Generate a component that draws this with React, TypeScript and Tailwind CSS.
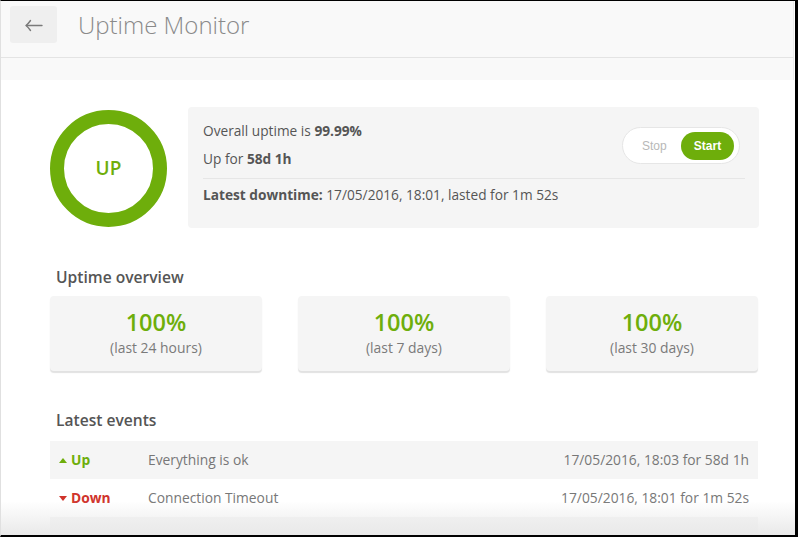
import React from "react";

const overview = [
  { value: "100%", label: "(last 24 hours)" },
  { value: "100%", label: "(last 7 days)" },
  { value: "100%", label: "(last 30 days)" },
];

const events = [
  { up: true, text: "Everything is ok", when: "17/05/2016, 18:03 for 58d 1h" },
  { up: false, text: "Connection Timeout", when: "17/05/2016, 18:01 for 1m 52s" },
];

function BackArrow() {
  return (
    <svg width="20" height="14" viewBox="0 0 20 14" fill="none" stroke="#7a7a7a" strokeWidth="1.4" strokeLinecap="round" strokeLinejoin="round">
      <path d="M18 7.5H2.5" />
      <path d="M6.5 2.5Q4.5 5.5 2 7.5Q4.5 9.5 6.5 12.5" />
    </svg>
  );
}

export default function App() {
  return (
    <div
      className="relative w-[798px] h-[537px] overflow-hidden bg-white border-t border-r-[3px] border-b-2 border-l border-t-black border-r-black border-b-black border-l-[#e0e0e0] text-[#555]"
      style={{ fontFamily: '"Open Sans", "Noto Sans", sans-serif' }}
    >
      {/* header */}
      <div className="h-[57px] bg-[#f9f9f9] border-b border-[#e4e4e4] border-r border-r-[#ececec] mr-[1px] flex items-start">
        <button className="mt-[5px] ml-[9px] w-[47px] h-[37px] rounded-[3px] bg-[#efefef] flex items-center justify-center">
          <BackArrow />
        </button>
        <h1 className="ml-[21px] mt-[6px] text-[24px] font-light text-[#8a8a8a]">
          Uptime Monitor
        </h1>
      </div>
      <div className="h-[22px] bg-[#f9f9f9] border-r border-[#ececec] mr-[1px]" />

      {/* content */}
      <div className="ml-[49px] w-[709px] pt-[27px]">
        <div className="flex items-start">
          <div className="mt-[3px] w-[117px] h-[117px] rounded-full border-[14px] border-[#6eae0b] flex items-center justify-center shrink-0">
            <span className="text-[19px] font-semibold text-[#6eae0b]">UP</span>
          </div>
          <div className="ml-[21px] flex-1 h-[121px] bg-[#f5f5f5] rounded-[4px] px-[15px] pt-[10px] pr-[14px]">
            <div className="flex justify-between items-start h-[56px]">
              <div className="text-[13.7px] text-[#555]">
                <div className="h-[28px] leading-[28px]">
                  Overall uptime is <span className="font-bold">99.99%</span>
                </div>
                <div className="h-[28px] leading-[28px]">
                  Up for <span className="font-bold">58d 1h</span>
                </div>
              </div>
              <div
                className="mt-[10px] mr-[5px] w-[118px] h-[37px] rounded-full bg-white border border-[#e6e6e6] flex items-center pl-[19px] pr-[5px] justify-between"
                style={{ fontFamily: '"Liberation Sans", Arial, sans-serif' }}
              >
                <span className="text-[12px] text-[#b8b8b8]">Stop</span>
                <span className="w-[53px] h-[28px] rounded-full bg-[#6eae0b] text-white text-[12px] font-bold flex items-center justify-center">
                  Start
                </span>
              </div>
            </div>
            <div className="mt-[5px] border-t border-[#e6e6e6]" />
            <div className="mt-[6px] h-[20px] leading-[20px] text-[13.7px]">
              <span className="font-bold">Latest downtime:</span> 17/05/2016, 18:01, lasted for 1m 52s
            </div>
          </div>
        </div>

        <h2 className="mt-[38px] ml-[6px] text-[15.6px] font-semibold text-[#555] leading-[22px]">
          Uptime overview
        </h2>
        <div className="mt-[8px] grid grid-cols-3 gap-[36px] pr-[1px]">
          {overview.map((o) => (
            <div
              key={o.label}
              className="h-[75px] bg-[#f5f5f5] rounded-[4px] shadow-[0_2px_1px_#e2e2e2] flex flex-col items-center pt-[12px]"
            >
              <div className="text-[23.5px] font-semibold text-[#6eae0b] leading-[28px]">{o.value}</div>
              <div className="mt-[2px] text-[13.9px] text-[#7a7a7a] leading-[20px]">{o.label}</div>
            </div>
          ))}
        </div>

        <h2 className="mt-[38px] ml-[6px] text-[15.6px] font-semibold text-[#555] leading-[22px]">
          Latest events
        </h2>
        <div className="mt-[10px] mr-[1px]">
          {events.map((e, i) => (
            <div
              key={e.text}
              className={`h-[38px] flex items-center text-[13.8px] pl-[9px] pr-[9px] ${i % 2 === 0 ? "bg-[#f5f5f5]" : "bg-white"}`}
            >
              <span
                className={`w-[89px] font-bold flex items-center gap-[4px] ${e.up ? "text-[#6eae0b]" : "text-[#d0332b]"}`}
              >
                <svg width="8" height="5" viewBox="0 0 8 5" fill="currentColor">
                  {e.up ? <path d="M0 5L4 0L8 5Z" /> : <path d="M0 0L8 0L4 5Z" />}
                </svg>
                {e.up ? "Up" : "Down"}
              </span>
              <span className="flex-1 text-[#777]">{e.text}</span>
              <span className="text-[#777]">{e.when}</span>
            </div>
          ))}
          <div className="h-[38px] bg-[#f5f5f5]" />
        </div>
      </div>

      {/* bottom fade */}
      <div className="absolute left-0 right-0 bottom-0 h-[34px] bg-gradient-to-b from-white/0 to-[#e9e9e9]" />
    </div>
  );
}
